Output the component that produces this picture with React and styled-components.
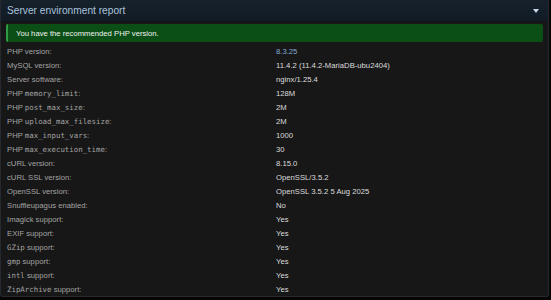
import React from 'react'
import styled, { createGlobalStyle } from 'styled-components'

const GlobalStyle = createGlobalStyle`
   html, body {
      margin: 0;
      padding: 0;
      background: #050505;
   }
   body {
      font-family: "Liberation Sans", Arial, sans-serif;
   }
`

const rows = [
   { label: ['PHP version:'], value: '8.3.25', link: true },
   { label: ['MySQL version:'], value: '11.4.2 (11.4.2-MariaDB-ubu2404)' },
   { label: ['Server software:'], value: 'nginx/1.25.4' },
   { label: ['PHP ', 'memory_limit', ':'], value: '128M' },
   { label: ['PHP ', 'post_max_size', ':'], value: '2M' },
   { label: ['PHP ', 'upload_max_filesize', ':'], value: '2M' },
   { label: ['PHP ', 'max_input_vars', ':'], value: '1000' },
   { label: ['PHP ', 'max_execution_time', ':'], value: '30' },
   { label: ['cURL version:'], value: '8.15.0' },
   { label: ['cURL SSL version:'], value: 'OpenSSL/3.5.2' },
   { label: ['OpenSSL version:'], value: 'OpenSSL 3.5.2 5 Aug 2025' },
   { label: ['Snuffleupagus enabled:'], value: 'No' },
   { label: ['Imagick support:'], value: 'Yes' },
   { label: ['EXIF support:'], value: 'Yes' },
   { label: ['', 'GZip', ' support:'], value: 'Yes' },
   { label: ['', 'gmp', ' support:'], value: 'Yes' },
   { label: ['', 'intl', ' support:'], value: 'Yes' },
   { label: ['', 'ZipArchive', ' support:'], value: 'Yes' },
]

const App = () => {
   return (
      <>
         <GlobalStyle />
         <Panel>
            <Header>
               <Title>Server environment report</Title>
               <Caret />
            </Header>
            <Notice>You have the recommended PHP version.</Notice>
            <List>
               {rows.map((r, i) => (
                  <Row key={i}>
                     <Label>
                        {r.label.map((part, j) =>
                           j % 2 === 1 ? <Code key={j}>{part}</Code> : <span key={j}>{part}</span>
                        )}
                     </Label>
                     <Value $link={r.link}>{r.value}</Value>
                  </Row>
               ))}
            </List>
         </Panel>
      </>
   )
}

const Panel = styled.section`
   width: 549px;
   height: 297px;
   box-sizing: border-box;
   background: #171717;
   border: 1px solid #262a2e;
   border-top: none;
   border-radius: 0 0 3px 3px;
   overflow: hidden;
`

const Header = styled.div`
   height: 21px;
   display: flex;
   align-items: center;
   justify-content: space-between;
   padding: 0 9px 0 6px;
   background: linear-gradient(180deg, #16212c 0%, #121b25 100%);
   border-bottom: 1px solid #0f151c;
`

const Title = styled.h2`
   margin: 0;
   font-size: 10.2px;
   font-weight: normal;
   color: #aac3dc;
`

const Caret = styled.span`
   width: 0;
   height: 0;
   border-left: 3.5px solid transparent;
   border-right: 3.5px solid transparent;
   border-top: 4px solid #c6d8ea;
   margin-top: 1px;
`

const Notice = styled.div`
   margin: 2px 5px 0 5px;
   height: 18px;
   display: flex;
   align-items: center;
   padding-left: 8px;
   background: #0b4f16;
   border-left: 2px solid #2f9b43;
   border-radius: 2px;
   color: #f2f2f2;
   font-size: 7.7px;
`

const List = styled.div`
   padding: 2px 0 0 6px;
`

const Row = styled.div`
   display: grid;
   grid-template-columns: 269px 1fr;
   height: 14px;
   align-items: center;
   font-size: 7.7px;
`

const Label = styled.div`
   color: #a3a3a3;
   white-space: nowrap;
`

const Code = styled.span`
   font-family: "DejaVu Sans Mono", "Liberation Mono", monospace;
   font-size: 7.4px;
`

const Value = styled.div`
   color: ${p => (p.$link ? '#86aed4' : '#dcdcdc')};
   white-space: nowrap;
`

export default App
